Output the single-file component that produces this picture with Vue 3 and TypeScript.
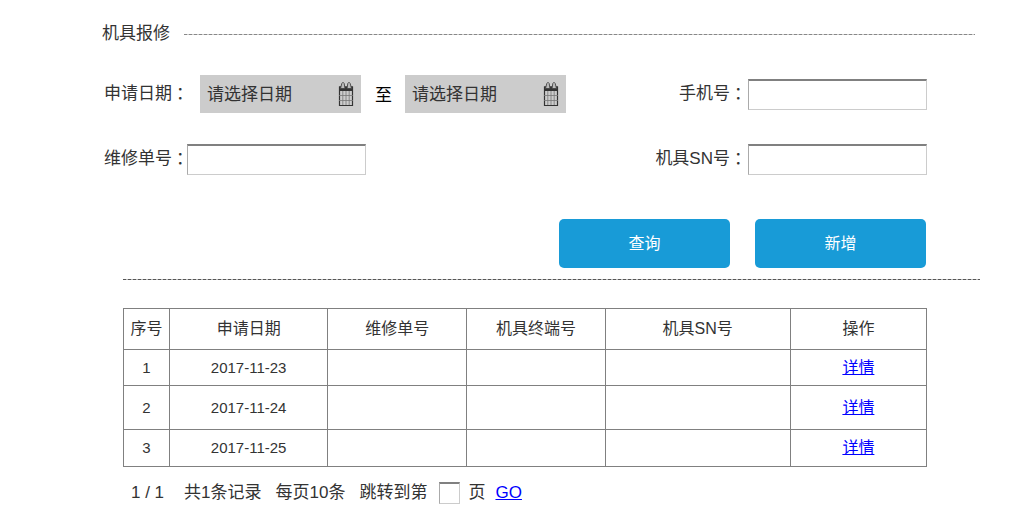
<script setup lang="ts">
import { ref } from 'vue'

interface RepairRow {
  id: number
  date: string
  order: string
  terminal: string
  sn: string
}

const startDate = ref('')
const endDate = ref('')
const phone = ref('')
const orderNo = ref('')
const sn = ref('')
const page = ref('')

const columns: string[] = ['序号', '申请日期', '维修单号', '机具终端号', '机具SN号', '操作']

const rows: RepairRow[] = [
  { id: 1, date: '2017-11-23', order: '', terminal: '', sn: '' },
  { id: 2, date: '2017-11-24', order: '', terminal: '', sn: '' },
  { id: 3, date: '2017-11-25', order: '', terminal: '', sn: '' },
]
</script>

<template>
  <main class="page">
    <header class="title">
      <h1>机具报修</h1>
      <span class="rule"></span>
    </header>

    <form class="filters" @submit.prevent>
      <div class="row">
        <div class="dates">
          <label class="label" for="start">申请日期<span class="colon">：</span></label>
          <div class="date">
            <input id="start" v-model="startDate" type="text" placeholder="请选择日期" />
            <svg class="calendar" viewBox="0 0 16 26" aria-hidden="true">
              <path d="M1.500 6h13v18.500h-13z" fill="#ccc" stroke="#333" stroke-width="1.200" />
              <path d="M1 5.500h14v4.500H1z" fill="#333" />
              <path d="M4.800 10v14M8 10v14M11.200 10v14M1 14.500h14M1 19.500h14" fill="none" stroke="#777" stroke-width="0.800" />
              <path d="M2.500 7.500L3.800 2.500Q5 0 6.200 2.500L7 7.500zM9 7.500l.8-5q1.200-2.500 2.400 0l1.300 5z" fill="#bbb" stroke="#444" stroke-width="0.900" />
            </svg>
          </div>
          <label class="to" for="end">至</label>
          <div class="date">
            <input id="end" v-model="endDate" type="text" placeholder="请选择日期" />
            <svg class="calendar" viewBox="0 0 16 26" aria-hidden="true">
              <path d="M1.500 6h13v18.500h-13z" fill="#ccc" stroke="#333" stroke-width="1.200" />
              <path d="M1 5.500h14v4.500H1z" fill="#333" />
              <path d="M4.800 10v14M8 10v14M11.200 10v14M1 14.500h14M1 19.500h14" fill="none" stroke="#777" stroke-width="0.800" />
              <path d="M2.500 7.500L3.800 2.500Q5 0 6.200 2.500L7 7.500zM9 7.500l.8-5q1.200-2.500 2.400 0l1.300 5z" fill="#bbb" stroke="#444" stroke-width="0.900" />
            </svg>
          </div>
        </div>
        <div class="field">
          <label class="label" for="phone">手机号<span class="colon">：</span></label>
          <input id="phone" v-model="phone" class="box" type="text" />
        </div>
      </div>
      <div class="row">
        <div class="field">
          <label class="label" for="order">维修单号<span class="colon">：</span></label>
          <input id="order" v-model="orderNo" class="box" type="text" />
        </div>
        <div class="field">
          <label class="label" for="sn">机具SN号<span class="colon">：</span></label>
          <input id="sn" v-model="sn" class="box" type="text" />
        </div>
      </div>
      <div class="actions">
        <button type="submit">查询</button>
        <button type="button">新增</button>
      </div>
    </form>

    <div class="divider"></div>

    <section class="results">
      <table>
        <colgroup>
          <col v-for="c in 6" :key="c" :class="'col-' + c" />
        </colgroup>
        <thead>
          <tr>
            <th v-for="name in columns" :key="name" scope="col">{{ name }}</th>
          </tr>
        </thead>
        <tbody>
          <tr v-for="row in rows" :key="row.id">
            <td>{{ row.id }}</td>
            <td>{{ row.date }}</td>
            <td>{{ row.order }}</td>
            <td>{{ row.terminal }}</td>
            <td>{{ row.sn }}</td>
            <td><a href="#">详情</a></td>
          </tr>
        </tbody>
      </table>

      <nav class="pager">
        <span class="count">1 / 1</span>
        <span>共1条记录</span>
        <span>每页10条</span>
        <label for="page">跳转到第</label>
        <input id="page" v-model="page" class="box" type="text" />
        <span class="unit">页</span>
        <a href="#">GO</a>
      </nav>
    </section>
  </main>
</template>

<style>
body {
  margin: 0;
  background: #fff;
}
</style>

<style scoped>
.page {
  box-sizing: border-box;
  padding: 20px 46px 16px 102px;
  font-family: "Liberation Sans", "Noto Sans CJK SC", sans-serif;
  font-size: 17px;
  line-height: 26px;
  color: #333;
}

.page input,
.page button {
  box-sizing: border-box;
  font: inherit;
  color: inherit;
}

.title {
  display: flex;
  align-items: center;
  gap: 14px;
  padding-right: 5px;
}

.title h1 {
  margin: 0;
  font-size: 17px;
  font-weight: 400;
  line-height: 28px;
}

.rule {
  flex: 1;
  height: 1px;
  background: repeating-linear-gradient(90deg, #888 0 3px, #ccc 3px 5px);
}

.filters {
  padding: 27px 53px 0 2px;
}

.row {
  display: flex;
  justify-content: space-between;
  align-items: center;
  height: 38px;
  margin-bottom: 27px;
}

.dates,
.field {
  display: flex;
  align-items: center;
}

.label {
  white-space: nowrap;
}

.colon {
  margin: 0 -6px 0 4px;
}

.date {
  display: flex;
  align-items: center;
  box-sizing: border-box;
  width: 161px;
  height: 38px;
  padding: 0 7px;
  background: #ccc;
}

.dates .label {
  margin-right: 13px;
}

.field:last-child .label {
  margin-right: 3px;
}

.date input {
  flex: 1;
  min-width: 0;
  padding: 2px 0 0;
  border: 0;
  outline: 0;
  background: none;
}

.date input::placeholder {
  color: #333;
  opacity: 1;
}

.calendar {
  flex: none;
  width: 16px;
  height: 26px;
}

.to {
  margin: 4px 13px 0 14px;
  color: #000;
}

.box {
  width: 179px;
  height: 31px;
  padding: 0 4px;
  border: 1px solid #ccc;
  border-top: 2px solid #808080;
  border-left-color: #aaa;
  background: #fff;
}

.actions {
  display: flex;
  justify-content: flex-end;
  gap: 25px;
  margin-top: 41px;
  padding-right: 1px;
}

.actions button {
  width: 171px;
  height: 49px;
  padding: 0;
  border: 0;
  border-radius: 5px;
  background: #189bd7;
  color: #fff;
  font-size: 16px;
}

.divider {
  height: 1px;
  margin: 11px 0 0 21px;
  background: repeating-linear-gradient(90deg, #555 0 3px, #bbb 3px 5px);
}

.results {
  padding: 28px 53px 0 21px;
}

table {
  width: 100%;
  table-layout: fixed;
  border-collapse: collapse;
}

.col-1 { width: 46px; }
.col-2 { width: 158px; }
.col-3 { width: 139px; }
.col-4 { width: 138px; }
.col-5 { width: 185px; }
.col-6 { width: 136px; }

th,
td {
  padding: 0;
  border: 1px solid #808080;
  text-align: center;
}

th {
  height: 40px;
  font-size: 16px;
  font-weight: 400;
}

td {
  height: 36px;
  font-size: 15px;
}

tbody tr:nth-child(1) td { height: 35px; }
tbody tr:nth-child(2) td { height: 43px; }

td a {
  font-size: 16px;
}

a {
  color: #00f;
}

.pager {
  display: flex;
  align-items: center;
  gap: 14px;
  margin-top: 13px;
  padding-left: 8px;
}

.count {
  margin-right: 6px;
}

.pager .box {
  width: 21px;
  height: 22px;
  margin: 0 -6px 0 -2px;
  padding: 0 2px;
}

.unit {
  margin-right: -4px;
}
</style>
